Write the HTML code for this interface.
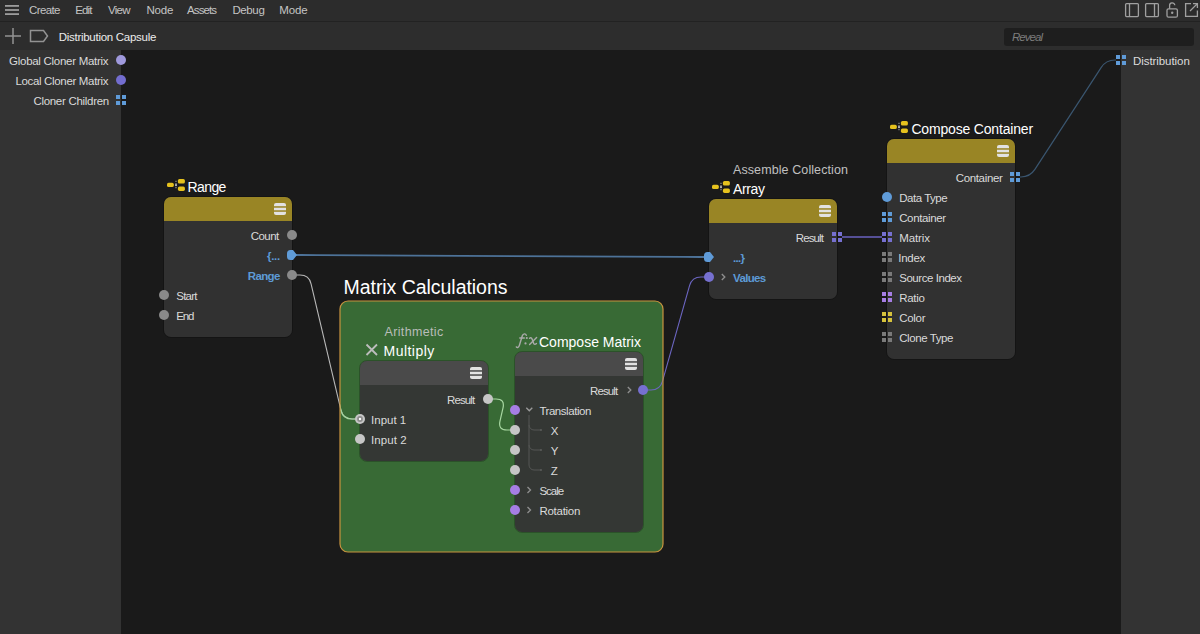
<!DOCTYPE html>
<html><head><meta charset="utf-8">
<style>
*{margin:0;padding:0;box-sizing:border-box}
html,body{width:1200px;height:634px;overflow:hidden;background:#1a1a1a;font-family:"Liberation Sans",sans-serif}
svg{position:absolute;left:0;top:0}
.x{position:absolute;white-space:nowrap;line-height:1}
</style></head><body>
<svg width="1200" height="634" viewBox="0 0 1200 634">
<rect x="0" y="0" width="1200" height="21" fill="#2c2c2c"/>
<rect x="0" y="21" width="1200" height="1" fill="#222"/>
<rect x="0" y="22" width="1200" height="28" fill="#2d2d2d"/>
<rect x="0" y="50" width="121" height="584" fill="#333"/>
<rect x="1121" y="50" width="79" height="584" fill="#333"/>
<g fill="#9c9c9c"><rect x="5" y="5" width="14" height="1.8"/><rect x="5" y="9.1" width="14" height="1.8"/><rect x="5" y="13.2" width="14" height="1.8"/></g>
<g stroke="#929292" stroke-width="1.5" fill="none"><path d="M13 28V44M5 36H21"/><path d="M30.5 30.5H43.5L47.5 36L43.5 41.5H30.5Z"/></g>
<rect x="1004" y="28" width="190" height="18" rx="3" fill="#1e1e1e"/>
<g stroke="#a0a0a0" stroke-width="1.3" fill="none"><rect x="1125.6" y="3.6" width="12.8" height="13" rx="1"/><path d="M1129.5 3.6V16.6"/><rect x="1145.6" y="3.6" width="12.8" height="13" rx="1"/><path d="M1154.5 3.6V16.6"/><rect x="1167" y="8.8" width="10.4" height="8.4" rx="1.5"/><path d="M1169.6 8.8V5.6A2.6 2.6 0 0 1 1174.8 5.2"/><path d="M1191 3.6H1185.6V16.4H1197.4V10.5"/><path d="M1190 11L1197.4 3.6M1193 3.6H1197.4V8"/></g><circle cx="1172.2" cy="12.8" r="1.2" fill="#a0a0a0"/>
<defs><clipPath id="gc"><rect x="340" y="301" width="323" height="251" rx="8"/></clipPath></defs>
<rect x="340" y="301" width="323" height="251" rx="8" fill="#386a35"/>
<path d="M292.00 255.00L301.00 255.00Q309.00 255.00 317.00 255.04L684.00 256.96Q692.00 257.00 700.00 257.00L709.00 257.00" stroke="#4d7298" stroke-width="1.8" fill="none"/>
<path d="M292.00 275.00L300.00 275.00Q309.00 275.00 311.07 283.76L340.93 410.24Q343.00 419.00 352.00 419.00L360.00 419.00" stroke="#b8b8b8" stroke-width="1.1" fill="none"/>
<path d="M292.00 275.00L300.00 275.00Q309.00 275.00 311.07 283.76L340.93 410.24Q343.00 419.00 352.00 419.00L360.00 419.00" stroke="#a4d69e" stroke-width="1.2" fill="none" clip-path="url(#gc)"/>
<path d="M488.00 399.00L496.00 399.00Q505.00 399.00 503.02 407.78L499.98 421.22Q498.00 430.00 507.00 430.00L515.00 430.00" stroke="#a8d8a2" stroke-width="1.2" fill="none"/>
<path d="M643.00 390.00L651.00 390.00Q660.00 390.00 662.45 381.34L689.55 285.66Q692.00 277.00 701.00 277.00L709.00 277.00" stroke="#6c66c2" stroke-width="1.1" fill="none"/>
<path d="M842.00 237.00L846.00 237.00Q854.00 237.00 862.00 237.00L862.00 237.00Q870.00 237.00 878.00 237.00L882.00 237.00" stroke="#6a62c0" stroke-width="1.4" fill="none"/>
<path d="M1020.00 177.00L1021.00 177.00Q1030.00 177.00 1034.90 169.45L1101.10 67.55Q1106.00 60.00 1115.00 60.00L1116.00 60.00" stroke="#3a5670" stroke-width="1.2" fill="none"/>
<rect x="340" y="301" width="323" height="251" rx="8" fill="none" stroke="#c8933f" stroke-width="1.2"/>
<rect x="163.5" y="196.5" width="129" height="141" rx="7.5" fill="none" stroke="#000" stroke-opacity="0.22" stroke-width="1"/>
<rect x="164" y="197" width="128" height="140" rx="7" fill="#313131"/>
<path d="M164 221V204A7 7 0 0 1 171 197H285A7 7 0 0 1 292 204V221Z" fill="#998525"/>
<rect x="274" y="203" width="12" height="12" rx="2" fill="#e2e2e2"/>
<rect x="274" y="206" width="12" height="1.9" fill="#998525" fill-opacity="0.8"/><rect x="274" y="210.1" width="12" height="1.9" fill="#998525" fill-opacity="0.8"/>
<rect x="708.5" y="198.5" width="129" height="101" rx="7.5" fill="none" stroke="#000" stroke-opacity="0.22" stroke-width="1"/>
<rect x="709" y="199" width="128" height="100" rx="7" fill="#313131"/>
<path d="M709 223V206A7 7 0 0 1 716 199H830A7 7 0 0 1 837 206V223Z" fill="#998525"/>
<rect x="819" y="205" width="12" height="12" rx="2" fill="#e2e2e2"/>
<rect x="819" y="208" width="12" height="1.9" fill="#998525" fill-opacity="0.8"/><rect x="819" y="212.1" width="12" height="1.9" fill="#998525" fill-opacity="0.8"/>
<rect x="886.5" y="138.5" width="129" height="221" rx="7.5" fill="none" stroke="#000" stroke-opacity="0.22" stroke-width="1"/>
<rect x="887" y="139" width="128" height="220" rx="7" fill="#313131"/>
<path d="M887 163V146A7 7 0 0 1 894 139H1008A7 7 0 0 1 1015 146V163Z" fill="#998525"/>
<rect x="997" y="145" width="12" height="12" rx="2" fill="#e2e2e2"/>
<rect x="997" y="148" width="12" height="1.9" fill="#998525" fill-opacity="0.8"/><rect x="997" y="152.1" width="12" height="1.9" fill="#998525" fill-opacity="0.8"/>
<rect x="359.5" y="360.5" width="129" height="101" rx="7.5" fill="none" stroke="#000" stroke-opacity="0.22" stroke-width="1"/>
<rect x="360" y="361" width="128" height="100" rx="7" fill="#343734"/>
<path d="M360 385V368A7 7 0 0 1 367 361H481A7 7 0 0 1 488 368V385Z" fill="#4a4a4a"/>
<rect x="470" y="367" width="12" height="12" rx="2" fill="#e2e2e2"/>
<rect x="470" y="370" width="12" height="1.9" fill="#4a4a4a" fill-opacity="0.8"/><rect x="470" y="374.1" width="12" height="1.9" fill="#4a4a4a" fill-opacity="0.8"/>
<rect x="514.5" y="351.5" width="129" height="181" rx="7.5" fill="none" stroke="#000" stroke-opacity="0.22" stroke-width="1"/>
<rect x="515" y="352" width="128" height="180" rx="7" fill="#343734"/>
<path d="M515 376V359A7 7 0 0 1 522 352H636A7 7 0 0 1 643 359V376Z" fill="#4a4a4a"/>
<rect x="625" y="358" width="12" height="12" rx="2" fill="#e2e2e2"/>
<rect x="625" y="361" width="12" height="1.9" fill="#4a4a4a" fill-opacity="0.8"/><rect x="625" y="365.1" width="12" height="1.9" fill="#4a4a4a" fill-opacity="0.8"/>
<circle cx="121" cy="60" r="5" fill="#9f99dc"/>
<circle cx="121" cy="80" r="5" fill="#736dcf"/>
<g fill="#5f9bd8"><rect x="116" y="95" width="4" height="4"/><rect x="122" y="95" width="4" height="4"/><rect x="116" y="101" width="4" height="4"/><rect x="122" y="101" width="4" height="4"/></g>
<g fill="#5f9bd8"><rect x="1116" y="55" width="4" height="4"/><rect x="1122" y="55" width="4" height="4"/><rect x="1116" y="61" width="4" height="4"/><rect x="1122" y="61" width="4" height="4"/></g>
<circle cx="292" cy="235" r="5" fill="#8a8a8a"/>
<path d="M287 253.5A3.5 3.5 0 0 1 290.5 250H293L297 255L293 260H290.5A3.5 3.5 0 0 1 287 256.5Z" fill="#5f9bd8"/>
<circle cx="292" cy="275" r="5" fill="#8a8a8a"/>
<circle cx="164" cy="295" r="5" fill="#8a8a8a"/>
<circle cx="164" cy="315" r="5" fill="#8a8a8a"/>
<g fill="#7670d0"><rect x="832" y="232" width="4" height="4"/><rect x="838" y="232" width="4" height="4"/><rect x="832" y="238" width="4" height="4"/><rect x="838" y="238" width="4" height="4"/></g>
<path d="M704 255.5A3.5 3.5 0 0 1 707.5 252H710L714 257L710 262H707.5A3.5 3.5 0 0 1 704 258.5Z" fill="#5f9bd8"/>
<circle cx="709" cy="277" r="5" fill="#7670d0"/>
<g fill="#5f9bd8"><rect x="1010" y="172" width="4" height="4"/><rect x="1016" y="172" width="4" height="4"/><rect x="1010" y="178" width="4" height="4"/><rect x="1016" y="178" width="4" height="4"/></g>
<circle cx="887" cy="197" r="5" fill="#5f9bd8"/>
<g fill="#5f9bd8"><rect x="882" y="212" width="4" height="4"/><rect x="888" y="212" width="4" height="4"/><rect x="882" y="218" width="4" height="4"/><rect x="888" y="218" width="4" height="4"/></g>
<g fill="#7670d0"><rect x="882" y="232" width="4" height="4"/><rect x="888" y="232" width="4" height="4"/><rect x="882" y="238" width="4" height="4"/><rect x="888" y="238" width="4" height="4"/></g>
<g fill="#7a7a7a"><rect x="882" y="252" width="4" height="4"/><rect x="888" y="252" width="4" height="4"/><rect x="882" y="258" width="4" height="4"/><rect x="888" y="258" width="4" height="4"/></g>
<g fill="#7a7a7a"><rect x="882" y="272" width="4" height="4"/><rect x="888" y="272" width="4" height="4"/><rect x="882" y="278" width="4" height="4"/><rect x="888" y="278" width="4" height="4"/></g>
<g fill="#a67ee4"><rect x="882" y="292" width="4" height="4"/><rect x="888" y="292" width="4" height="4"/><rect x="882" y="298" width="4" height="4"/><rect x="888" y="298" width="4" height="4"/></g>
<g fill="#d6c23c"><rect x="882" y="312" width="4" height="4"/><rect x="888" y="312" width="4" height="4"/><rect x="882" y="318" width="4" height="4"/><rect x="888" y="318" width="4" height="4"/></g>
<g fill="#7a7a7a"><rect x="882" y="332" width="4" height="4"/><rect x="888" y="332" width="4" height="4"/><rect x="882" y="338" width="4" height="4"/><rect x="888" y="338" width="4" height="4"/></g>
<circle cx="488" cy="399" r="5" fill="#c6c6c6"/>
<circle cx="360" cy="419" r="5" fill="#c6c6c6"/>
<circle cx="360" cy="419" r="2.9" fill="#8c8c8c"/>
<circle cx="360" cy="419" r="1.2" fill="#ffffff"/>
<circle cx="360" cy="439" r="5" fill="#c6c6c6"/>
<circle cx="643" cy="390" r="5" fill="#7670d0"/>
<circle cx="515" cy="410" r="5" fill="#a67ee4"/>
<circle cx="515" cy="430" r="5" fill="#c6c6c6"/>
<circle cx="515" cy="450" r="5" fill="#c6c6c6"/>
<circle cx="515" cy="470" r="5" fill="#c6c6c6"/>
<circle cx="515" cy="490" r="5" fill="#a67ee4"/>
<circle cx="515" cy="510" r="5" fill="#a67ee4"/>
<path d="M721.8 274L724.8 277L721.8 280" stroke="#8e8e8e" stroke-width="1.35" fill="none"/>
<path d="M627.8 387L630.8 390L627.8 393" stroke="#8e8e8e" stroke-width="1.35" fill="none"/>
<path d="M527.5 487L530.5 490L527.5 493" stroke="#8e8e8e" stroke-width="1.35" fill="none"/>
<path d="M527.5 507L530.5 510L527.5 513" stroke="#8e8e8e" stroke-width="1.35" fill="none"/>
<path d="M526.3 407.8L529.3 410.8L532.3 407.8" stroke="#9a9a9a" stroke-width="1.35" fill="none"/>
<path d="M529 415V425A5 5 0 0 0 534 430H541M529 425V445A5 5 0 0 0 534 450H541M529 445V465A5 5 0 0 0 534 470H541" stroke="#545654" stroke-width="1" fill="none"/>
<g fill="#5a5c5a"><circle cx="541" cy="430" r="1"/><circle cx="541" cy="450" r="1"/><circle cx="541" cy="470" r="1"/></g>
<g stroke="#aaaaaa" stroke-width="1.45" fill="none" stroke-linecap="round"><path d="M526.3 335.2C525.6 333.4 523.2 333.3 522.3 335.8L519.3 345.6C518.8 347.4 517.3 347.9 516.4 346.9"/><path d="M519.8 338H524.3"/><path d="M529.6 338.3C530.8 337.1 531.6 337.6 532.4 339.8L533.5 343C534.1 344.7 535.3 344.8 536.4 343.5"/><path d="M536.6 337.6L529.6 344.4"/></g><g fill="#aaaaaa"><circle cx="526.8" cy="338" r="1.1"/><circle cx="525.5" cy="343.4" r="1.1"/></g>
<g fill="#e6c21e"><rect x="167" y="182.7" width="6.8" height="4.4" rx="1.6"/><rect x="177.9" y="178.9" width="7" height="4.6" rx="1.6"/><rect x="177.9" y="186.4" width="7" height="4.5" rx="1.6"/></g>
<path d="M176 180.8V189" stroke="#9a9a9a" stroke-width="1.1" fill="none" stroke-dasharray="1.2 0.9"/><circle cx="176" cy="185" r="1" fill="#c8c8c8"/>
<g fill="#e6c21e"><rect x="712" y="184.7" width="6.8" height="4.4" rx="1.6"/><rect x="722.9" y="180.9" width="7" height="4.6" rx="1.6"/><rect x="722.9" y="188.4" width="7" height="4.5" rx="1.6"/></g>
<path d="M721 182.8V191" stroke="#9a9a9a" stroke-width="1.1" fill="none" stroke-dasharray="1.2 0.9"/><circle cx="721" cy="187" r="1" fill="#c8c8c8"/>
<g fill="#e6c21e"><rect x="890" y="124.7" width="6.8" height="4.4" rx="1.6"/><rect x="900.9" y="120.9" width="7" height="4.6" rx="1.6"/><rect x="900.9" y="128.4" width="7" height="4.5" rx="1.6"/></g>
<path d="M899 122.8V131" stroke="#9a9a9a" stroke-width="1.1" fill="none" stroke-dasharray="1.2 0.9"/><circle cx="899" cy="127" r="1" fill="#c8c8c8"/>
<path d="M366.5 344.5L377 355M377 344.5L366.5 355" stroke="#bdbdbd" stroke-width="1.8"/>
</svg>
<div class="x" style="left:29.10px;top:5px;font-size:11.5px;color:#c4c4c4;letter-spacing:-0.644px">Create</div>
<div class="x" style="left:75.30px;top:5px;font-size:11.5px;color:#c4c4c4;letter-spacing:-0.874px">Edit</div>
<div class="x" style="left:108.00px;top:5px;font-size:11.5px;color:#c4c4c4;letter-spacing:-0.704px">View</div>
<div class="x" style="left:146.40px;top:5px;font-size:11.5px;color:#c4c4c4;letter-spacing:-0.165px">Node</div>
<div class="x" style="left:187.00px;top:5px;font-size:11.5px;color:#c4c4c4;letter-spacing:-0.892px">Assets</div>
<div class="x" style="left:232.40px;top:5px;font-size:11.5px;color:#c4c4c4;letter-spacing:-0.373px">Debug</div>
<div class="x" style="left:279.30px;top:5px;font-size:11.5px;color:#c4c4c4;letter-spacing:-0.124px">Mode</div>
<div class="x" style="left:58.70px;top:31.700000000000003px;font-size:11.5px;color:#ebebeb;letter-spacing:-0.274px">Distribution Capsule</div>
<div class="x" style="left:1011.90px;top:32px;font-size:11.5px;color:#7c7c7c;letter-spacing:-0.948px;font-style:italic">Reveal</div>
<div class="x" style="left:9.10px;top:56px;font-size:11.5px;color:#dadada;letter-spacing:-0.282px">Global Cloner Matrix</div>
<div class="x" style="left:15.40px;top:76px;font-size:11.5px;color:#dadada;letter-spacing:-0.329px">Local Cloner Matrix</div>
<div class="x" style="left:33.40px;top:96px;font-size:11.5px;color:#dadada;letter-spacing:-0.293px">Cloner Children</div>
<div class="x" style="left:1133.00px;top:56px;font-size:11.5px;color:#dcdcdc;letter-spacing:-0.066px">Distribution</div>
<div class="x" style="left:187.60px;top:180px;font-size:14px;color:#ffffff;letter-spacing:-0.617px">Range</div>
<div class="x" style="left:250.80px;top:231px;font-size:11.5px;color:#dadada;letter-spacing:-0.573px">Count</div>
<div class="x" style="left:267.00px;top:251px;font-size:11.5px;color:#5d9ad6;letter-spacing:-0.288px;font-weight:bold">{...</div>
<div class="x" style="left:247.70px;top:271px;font-size:11.5px;color:#5d9ad6;letter-spacing:-0.613px;font-weight:bold">Range</div>
<div class="x" style="left:176.30px;top:291px;font-size:11.5px;color:#dadada;letter-spacing:-0.773px">Start</div>
<div class="x" style="left:176.30px;top:311px;font-size:11.5px;color:#dadada;letter-spacing:-1.133px">End</div>
<div class="x" style="left:733.00px;top:164px;font-size:12.5px;color:#c0c0c0;letter-spacing:0.095px">Assemble Collection</div>
<div class="x" style="left:733.00px;top:182px;font-size:14px;color:#ffffff;letter-spacing:-0.362px">Array</div>
<div class="x" style="left:795.80px;top:233px;font-size:11.5px;color:#dadada;letter-spacing:-0.900px">Result</div>
<div class="x" style="left:733.10px;top:253px;font-size:11.5px;color:#5d9ad6;letter-spacing:-0.762px;font-weight:bold">...}</div>
<div class="x" style="left:733.10px;top:273px;font-size:11.5px;color:#5d9ad6;letter-spacing:-0.669px;font-weight:bold">Values</div>
<div class="x" style="left:911.40px;top:122px;font-size:14px;color:#ffffff;letter-spacing:-0.178px">Compose Container</div>
<div class="x" style="left:955.70px;top:173px;font-size:11.5px;color:#dadada;letter-spacing:-0.342px">Container</div>
<div class="x" style="left:899.20px;top:193px;font-size:11.5px;color:#dadada;letter-spacing:-0.465px">Data Type</div>
<div class="x" style="left:899.20px;top:213px;font-size:11.5px;color:#dadada;letter-spacing:-0.379px">Container</div>
<div class="x" style="left:899.20px;top:233px;font-size:11.5px;color:#dadada;letter-spacing:-0.111px">Matrix</div>
<div class="x" style="left:898.20px;top:253px;font-size:11.5px;color:#dadada;letter-spacing:-0.246px">Index</div>
<div class="x" style="left:899.20px;top:273px;font-size:11.5px;color:#dadada;letter-spacing:-0.447px">Source Index</div>
<div class="x" style="left:899.20px;top:293px;font-size:11.5px;color:#dadada;letter-spacing:-0.288px">Ratio</div>
<div class="x" style="left:899.20px;top:313px;font-size:11.5px;color:#dadada;letter-spacing:-0.288px">Color</div>
<div class="x" style="left:899.20px;top:333px;font-size:11.5px;color:#dadada;letter-spacing:-0.409px">Clone Type</div>
<div class="x" style="left:343.50px;top:278px;font-size:19.5px;color:#ffffff;letter-spacing:-0.043px">Matrix Calculations</div>
<div class="x" style="left:384.50px;top:326px;font-size:12.5px;color:#b9bdb9;letter-spacing:0.354px">Arithmetic</div>
<div class="x" style="left:383.50px;top:344px;font-size:14px;color:#ffffff;letter-spacing:0.478px">Multiply</div>
<div class="x" style="left:447.00px;top:395px;font-size:11.5px;color:#dadada;letter-spacing:-0.880px">Result</div>
<div class="x" style="left:371.10px;top:415px;font-size:11.5px;color:#dadada">Input 1</div>
<div class="x" style="left:371.10px;top:435px;font-size:11.5px;color:#dadada;letter-spacing:0.055px">Input 2</div>
<div class="x" style="left:539.00px;top:335px;font-size:14px;color:#ffffff">Compose Matrix</div>
<div class="x" style="left:590.00px;top:386px;font-size:11.5px;color:#dadada;letter-spacing:-0.900px">Result</div>
<div class="x" style="left:539.40px;top:406px;font-size:11.5px;color:#dadada;letter-spacing:-0.447px">Translation</div>
<div class="x" style="left:550.80px;top:426px;font-size:11.5px;color:#dadada">X</div>
<div class="x" style="left:550.80px;top:446px;font-size:11.5px;color:#dadada">Y</div>
<div class="x" style="left:550.80px;top:466px;font-size:11.5px;color:#dadada">Z</div>
<div class="x" style="left:539.40px;top:486px;font-size:11.5px;color:#dadada;letter-spacing:-1.018px">Scale</div>
<div class="x" style="left:539.40px;top:506px;font-size:11.5px;color:#dadada;letter-spacing:-0.262px">Rotation</div>
</body></html>
